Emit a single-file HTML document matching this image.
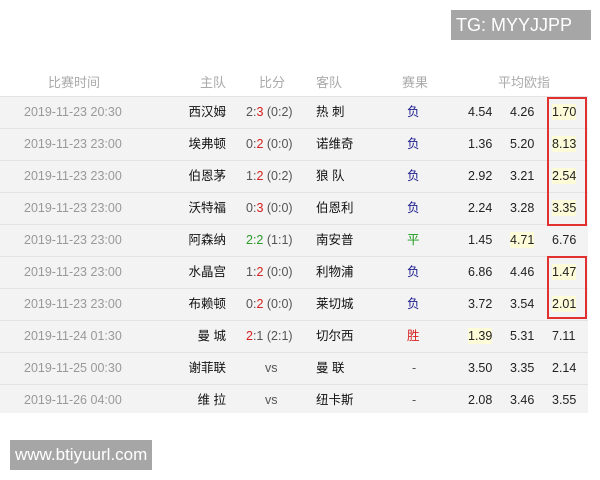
<!DOCTYPE html>
<html><head><meta charset="utf-8"><style>
body{margin:0;width:600px;height:480px;background:#fff;font-family:"Liberation Sans","Noto Sans CJK SC",sans-serif;position:relative;overflow:hidden}
.a{position:absolute;white-space:nowrap;line-height:16px}
.hd{color:#aaa;font-size:13px;top:75px}
.row{position:absolute;left:0;width:588px;height:31px;background:#f3f3f3;border-bottom:1px solid #e2e2e2}
.row div{position:absolute;top:7px;font-size:12.5px;line-height:16px;height:16px;white-space:nowrap}
.t{left:24px;color:#999}
.h{right:362px;color:#111}
.s{left:246px;color:#555}
.w{left:316px;color:#111}
.r{left:407px;color:#1a1a8c}
.o1{left:468px;color:#222}.o2{left:510px;color:#222}.o3{left:552px;color:#222}
.y{background:#fdfbd8}
.red{color:#d42020}
.box{position:absolute;border:2px solid #e03030;box-sizing:border-box}
.tag{position:absolute;background:#a6a6a6;color:#fff;font-size:18px;line-height:30px}
</style></head><body>
<div class="tag" style="left:451px;top:10px;width:140px;height:30px;padding-left:5px;box-sizing:border-box">TG: MYYJJPP</div>
<div class="a hd" style="left:48px">比赛时间</div>
<div class="a hd" style="left:200px">主队</div>
<div class="a hd" style="left:259px">比分</div>
<div class="a hd" style="left:316px">客队</div>
<div class="a hd" style="left:402px">赛果</div>
<div class="a hd" style="left:498px">平均欧指</div>
<div style="position:absolute;left:0;top:96px;width:588px;border-top:1px solid #e2e2e2"></div>

<div class="row" style="top:97px"><div class="t">2019-11-23 20:30</div><div class="h">西汉姆</div><div class="s">2:<span class="red">3</span> (0:2)</div><div class="w">热 刺</div><div class="r">负</div><div class="o1">4.54</div><div class="o2">4.26</div><div class="o3 y">1.70</div></div>
<div class="row" style="top:129px"><div class="t">2019-11-23 23:00</div><div class="h">埃弗顿</div><div class="s">0:<span class="red">2</span> (0:0)</div><div class="w">诺维奇</div><div class="r">负</div><div class="o1">1.36</div><div class="o2">5.20</div><div class="o3 y">8.13</div></div>
<div class="row" style="top:161px"><div class="t">2019-11-23 23:00</div><div class="h">伯恩茅</div><div class="s">1:<span class="red">2</span> (0:2)</div><div class="w">狼 队</div><div class="r">负</div><div class="o1">2.92</div><div class="o2">3.21</div><div class="o3 y">2.54</div></div>
<div class="row" style="top:193px"><div class="t">2019-11-23 23:00</div><div class="h">沃特福</div><div class="s">0:<span class="red">3</span> (0:0)</div><div class="w">伯恩利</div><div class="r">负</div><div class="o1">2.24</div><div class="o2">3.28</div><div class="o3 y">3.35</div></div>
<div class="row" style="top:225px"><div class="t">2019-11-23 23:00</div><div class="h">阿森纳</div><div class="s" style="color:#2a9a2a">2:2 <span style="color:#555">(1:1)</span></div><div class="w">南安普</div><div class="r" style="color:#1a9a1a">平</div><div class="o1">1.45</div><div class="o2 y">4.71</div><div class="o3">6.76</div></div>
<div class="row" style="top:257px"><div class="t">2019-11-23 23:00</div><div class="h">水晶宫</div><div class="s">1:<span class="red">2</span> (0:0)</div><div class="w">利物浦</div><div class="r">负</div><div class="o1">6.86</div><div class="o2">4.46</div><div class="o3 y">1.47</div></div>
<div class="row" style="top:289px"><div class="t">2019-11-23 23:00</div><div class="h">布赖顿</div><div class="s">0:<span class="red">2</span> (0:0)</div><div class="w">莱切城</div><div class="r">负</div><div class="o1">3.72</div><div class="o2">3.54</div><div class="o3 y">2.01</div></div>
<div class="row" style="top:321px"><div class="t">2019-11-24 01:30</div><div class="h">曼 城</div><div class="s"><span class="red">2</span>:1 (2:1)</div><div class="w">切尔西</div><div class="r red">胜</div><div class="o1 y">1.39</div><div class="o2">5.31</div><div class="o3">7.11</div></div>
<div class="row" style="top:353px"><div class="t">2019-11-25 00:30</div><div class="h">谢菲联</div><div class="s" style="left:265px">vs</div><div class="w">曼 联</div><div class="r" style="color:#555;left:412px">-</div><div class="o1">3.50</div><div class="o2">3.35</div><div class="o3">2.14</div></div>
<div class="row" style="top:385px;height:28px;border:none"><div class="t">2019-11-26 04:00</div><div class="h">维 拉</div><div class="s" style="left:265px">vs</div><div class="w">纽卡斯</div><div class="r" style="color:#555;left:412px">-</div><div class="o1">2.08</div><div class="o2">3.46</div><div class="o3">3.55</div></div>

<div class="box" style="left:547px;top:97px;width:40px;height:129px"></div>
<div class="box" style="left:547px;top:256px;width:40px;height:63px"></div>
<div class="tag" style="left:10px;top:440px;width:142px;height:30px;padding-left:5px;box-sizing:border-box;font-size:17px">www.btiyuurl.com</div>
</body></html>
